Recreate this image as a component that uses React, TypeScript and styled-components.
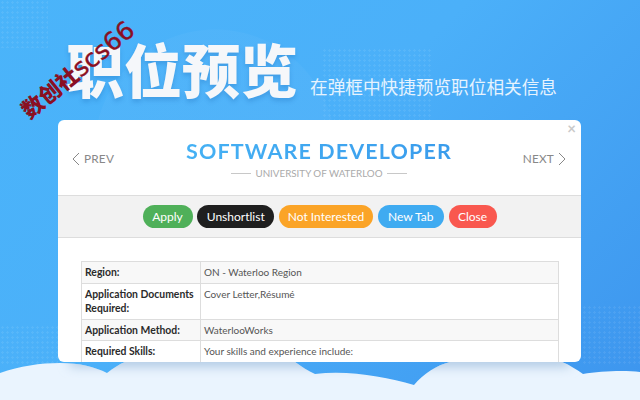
import React from "react";
import styled, { createGlobalStyle } from "styled-components";

const Global = createGlobalStyle`
  html, body { margin: 0; padding: 0; background: #3f9bf0; }
  * { box-sizing: border-box; }
`;

const Page = styled.div`
  position: relative;
  width: 640px;
  height: 400px;
  overflow: hidden;
  display: flex;
  flex-direction: column;
  font-family: "Lato", "Noto Sans CJK SC", sans-serif;
  background: radial-gradient(circle at 215px 150px, rgba(255,255,255,0.03) 0 120px, transparent 121px),
    linear-gradient(135deg, #4ab4fa 0%, #4bb0f9 45%, #3d95ee 100%);
`;

const Dots = styled.div<{ $x: number; $y: number; $w: number; $h: number }>`
  position: absolute;
  left: ${(p) => p.$x}px;
  top: ${(p) => p.$y}px;
  width: ${(p) => p.$w}px;
  height: ${(p) => p.$h}px;
  background-image: radial-gradient(circle, rgba(255,255,255,0.07) 1px, transparent 1.2px);
  background-size: 5px 5px;
`;

const Clouds = styled.svg`
  position: absolute;
  left: 0;
  bottom: 0;
  width: 640px;
  height: 50px;
`;

const Hero = styled.header`
  position: relative;
  height: 120px;
  flex: none;
  display: flex;
  align-items: flex-start;
  padding: 35px 0 0 66px;
`;

const Heading = styled.h1`
  margin: 0;
  width: 232px;
  font-family: "Noto Sans CJK SC", sans-serif;
  font-size: 58px;
  line-height: 66px;
  font-weight: 900;
  white-space: nowrap;
  color: #f5f7fa;
  text-shadow: 0 3px 4px rgba(20, 90, 170, 0.25);
`;

const Tagline = styled.p`
  margin: 39px 0 0 12px;
  font-family: "Noto Sans CJK SC", sans-serif;
  font-size: 17.65px;
  line-height: 26px;
  font-weight: 400;
  white-space: nowrap;
  color: #e6f3fe;
`;

const Watermark = styled.div`
  position: absolute;
  left: 9px;
  top: 53px;
  width: 138px;
  line-height: 30px;
  white-space: nowrap;
  color: #8a0f22;
  transform: rotate(-39deg);
`;

const WatermarkCjk = styled.span`
  font-family: "Noto Sans CJK SC", sans-serif;
  font-size: 22px;
  font-weight: 900;
`;

const WatermarkLatin = styled.span`
  font-family: "DejaVu Sans", sans-serif;
  font-size: 25px;
  font-weight: 400;
  -webkit-text-stroke: 0.4px #8a0f22;
`;

const Modal = styled.section`
  position: relative;
  margin-left: 58px;
  width: 523px;
  height: 242px;
  flex: none;
  background: #fff;
  border-radius: 6px;
  overflow: hidden;
`;

const CloseX = styled.span`
  position: absolute;
  top: 1px;
  right: 5px;
  font-size: 15px;
  line-height: 15px;
  font-weight: 700;
  color: #c9c9c9;
`;

const ModalHead = styled.div`
  height: 75px;
  display: grid;
  grid-template-columns: 100px minmax(0, 1fr) 100px;
  align-items: start;
  padding: 0 15px 0 14px;
`;

const Nav = styled.div<{ $right?: boolean }>`
  display: flex;
  align-items: center;
  justify-content: ${(p) => (p.$right ? "flex-end" : "flex-start")};
  gap: 4px;
  margin-top: 32px;
  font-size: 11.8px;
  line-height: 14px;
  letter-spacing: 0.2px;
  color: #888;
`;

const TitleBox = styled.div`
  display: flex;
  flex-direction: column;
  align-items: center;
  padding-top: 18px;
`;

const JobTitle = styled.h2`
  margin: 0;
  font-size: 21.5px;
  line-height: 26px;
  font-weight: 700;
  letter-spacing: 1.12px;
  white-space: nowrap;
  background: linear-gradient(90deg, #45b1f4, #3a9cec);
  -webkit-background-clip: text;
  background-clip: text;
  color: transparent;
`;

const Employer = styled.div`
  display: flex;
  align-items: center;
  gap: 4px;
  margin-top: 2px;
  font-size: 9.8px;
  line-height: 14px;
  color: #aaa;
  white-space: nowrap;
  &::before, &::after {
    content: "";
    width: 20px;
    height: 1px;
    background: #c8c8c8;
  }
`;

const Toolbar = styled.div`
  height: 43px;
  display: flex;
  align-items: center;
  justify-content: center;
  gap: 4.75px;
  background: #f2f2f2;
  border-top: 1px solid #ddd;
  border-bottom: 1px solid #ddd;
`;

const Pill = styled.button<{ $bg: string; $w: number }>`
  width: ${(p) => p.$w}px;
  height: 23px;
  padding: 0;
  border: 0;
  border-radius: 12px;
  font-family: inherit;
  font-size: 12px;
  line-height: 23px;
  color: #fff;
  background: ${(p) => p.$bg};
`;

const Body = styled.div`
  padding: 23px 22px 0 23px;
`;

const Table = styled.table`
  width: 478px;
  border-collapse: collapse;
  table-layout: fixed;
  font-size: 10px;
  line-height: 14.5px;
  color: #333;
`;

const Row = styled.tr<{ $shade?: boolean }>`
  background: ${(p) => (p.$shade ? "#f8f8f8" : "#fff")};
`;

const Label = styled.th`
  width: 119px;
  padding: 3px 3px;
  border: 1px solid #ddd;
  text-align: left;
  vertical-align: top;
  font-size: 10.4px;
  font-weight: 700;
  color: #2b2b2b;
`;

const Value = styled.td`
  padding: 3px 3px;
  border: 1px solid #ddd;
  vertical-align: top;
  color: #555;
`;

const Chevron = ({ right }: { right?: boolean }) => (
  <svg width="8" height="14" viewBox="0 0 8 14" fill="none" stroke="#888" strokeWidth="1">
    <path d={right ? "M1 1l6 6-6 6" : "M7 1L1 7l6 6"} />
  </svg>
);

const rows = [
  { label: "Region:", value: "ON - Waterloo Region", shade: true },
  { label: "Application Documents Required:", value: "Cover Letter,Résumé" },
  { label: "Application Method:", value: "WaterlooWorks", shade: true },
  { label: "Required Skills:", value: "Your skills and experience include:" },
];

const pills = [
  { text: "Apply", bg: "#4fb059", w: 50 },
  { text: "Unshortlist", bg: "#1f1f1f", w: 77 },
  { text: "Not Interested", bg: "#fba427", w: 94 },
  { text: "New Tab", bg: "#3fabf1", w: 66 },
  { text: "Close", bg: "#f9584f", w: 48 },
];

const cloudPath =
  "M0 23C20 16 40 13 60 13C80 13 95 17 107 23C113 18 120 14 125 12L295 12C302 17 308 21 315 24C350 20 385 27 414 35C423 24 437 15 450 12L562 12C570 15 577 20 583 24C600 21 625 20 640 22V50H0Z";

export default function App() {
  return (
    <Page>
      <Global />
      <Dots $x={0} $y={0} $w={48} $h={48} />
      <Dots $x={322} $y={48} $w={110} $h={72} />
      <Dots $x={582} $y={305} $w={58} $h={60} />
      <Dots $x={0} $y={325} $w={58} $h={40} />
      <Clouds viewBox="0 0 640 50">
        <defs>
          <clipPath id="cloud">
            <path d={cloudPath} />
          </clipPath>
          <filter id="soft" x="-10%" y="-100%" width="120%" height="300%">
            <feGaussianBlur stdDeviation="6" />
          </filter>
        </defs>
        <path fill="#eaf4fe" d={cloudPath} />
        <g clipPath="url(#cloud)">
          <rect x="70" y="4" width="500" height="12" fill="#a9c4e0" filter="url(#soft)" />
        </g>
      </Clouds>
      <Hero>
        <Heading>职位预览</Heading>
        <Tagline>在弹框中快捷预览职位相关信息</Tagline>
      </Hero>
      <Modal>
        <CloseX>×</CloseX>
        <ModalHead>
          <Nav>
            <Chevron />
            PREV
          </Nav>
          <TitleBox>
            <JobTitle>SOFTWARE DEVELOPER</JobTitle>
            <Employer>UNIVERSITY OF WATERLOO</Employer>
          </TitleBox>
          <Nav $right>
            NEXT
            <Chevron right />
          </Nav>
        </ModalHead>
        <Toolbar>
          {pills.map((p) => (
            <Pill key={p.text} $bg={p.bg} $w={p.w}>
              {p.text}
            </Pill>
          ))}
        </Toolbar>
        <Body>
          <Table>
            <tbody>
              {rows.map((r) => (
                <Row key={r.label} $shade={r.shade}>
                  <Label>{r.label}</Label>
                  <Value>{r.value}</Value>
                </Row>
              ))}
            </tbody>
          </Table>
        </Body>
      </Modal>
      <Watermark>
        <WatermarkCjk>数创社</WatermarkCjk>
        <WatermarkLatin>scs66</WatermarkLatin>
      </Watermark>
    </Page>
  );
}
